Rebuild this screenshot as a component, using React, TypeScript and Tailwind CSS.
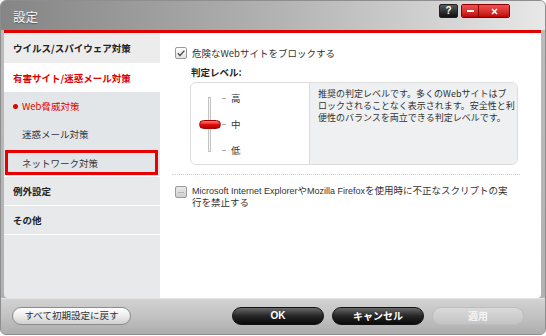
import React from 'react'

const jp = "font-['Noto_Sans_CJK_JP',sans-serif]"

function CheckBox({ checked }: { checked: boolean }) {
  return (
    <div
      className={`w-[12px] h-[12px] shrink-0 rounded-[2px] border border-[#9a9a9a] flex items-center justify-center ${
        checked ? 'bg-gradient-to-b from-white to-[#e2e2e2]' : 'bg-gradient-to-b from-[#e8e8e8] to-[#cfcfcf]'
      }`}
    >
      {checked ? (
        <svg width="10" height="10" viewBox="0 0 10 10">
          <path d="M1.8 5.2 L4 7.4 L8.4 2.6" fill="none" stroke="#4a4a4a" strokeWidth="1.4" />
        </svg>
      ) : (
        <div className="w-[6px] h-[1px] bg-[#b5b5b5]" />
      )}
    </div>
  )
}

export default function App() {
  const levels = ['高', '中', '低']
  const desc = [
    '推奨の判定レベルです。多くのWebサイトはブ',
    'ロックされることなく表示されます。安全性と利',
    '便性のバランスを両立できる判定レベルです。',
  ]

  return (
    <div className={`w-[546px] h-[336px] bg-white text-[#333] ${jp}`}>
      <div className="w-[546px] h-[335px] rounded-[6px] border border-[#8e8e8e] bg-gradient-to-b from-[#bdbdbd] to-[#b0b0b0] flex flex-col overflow-hidden">
        {/* Title bar */}
        <div className="h-[29px] shrink-0 flex items-start justify-between bg-gradient-to-r from-[#858585] via-[#b2b2b2] to-[#e8e8e8] pl-[12px] pr-[35px]">
          <span className="mt-[8px] text-[12.5px] leading-[16px] text-[#f6f6f6] [text-shadow:0_1px_1px_rgba(0,0,0,0.35)]">設定</span>
          <div className="flex mt-[3px] gap-[3px]">
            <div className="w-[19px] h-[14px] rounded-[2px] border border-[#222] bg-gradient-to-b from-[#5a5a5a] to-[#111] flex items-center justify-center">
              <span className="text-[10px] leading-none font-bold text-white font-['Liberation_Sans',sans-serif]">?</span>
            </div>
            <div className="flex h-[14px] rounded-[2px] border border-[#8a0000] overflow-hidden">
              <div className="w-[17px] bg-gradient-to-b from-[#f05050] to-[#c00000] flex items-center justify-center border-r border-[#8a0000]">
                <div className="w-[7px] h-[2px] bg-white" />
              </div>
              <div className="w-[30px] bg-gradient-to-b from-[#f05050] to-[#c00000] flex items-center justify-center">
                <svg width="7" height="7" viewBox="0 0 7 7">
                  <path d="M1 1 L6 6 M6 1 L1 6" stroke="white" strokeWidth="1.6" />
                </svg>
              </div>
            </div>
          </div>
        </div>

        {/* Body */}
        <div className="flex-1 flex flex-col pl-[3px] pr-[4px]">
          <div className="h-[3px] bg-[#e00000] shrink-0" />
          <div className="flex-1 flex rounded-b-[4px] overflow-hidden">
            {/* Sidebar */}
            <div className="w-[156px] shrink-0 bg-[#e7e9eb] flex flex-col text-[9.5px] leading-[12px]">
              <div className="h-[30px] bg-[#ececec] flex items-center pl-[9px] font-bold text-[#222]">ウイルス/スパイウェア対策</div>
              <div className="h-[29px] bg-white flex items-center pl-[9px] font-bold text-[#e00000]">有害サイト/迷惑メール対策</div>
              <div className="bg-[#e3e6e9] flex flex-col border-b border-white">
                <div className="h-[28px] flex items-center pl-[9px] text-[#e00000]">
                  <span className="w-[5px] h-[5px] rounded-full bg-[#e00000] mr-[4px]" />
                  Web脅威対策
                </div>
                <div className="h-[28px] flex items-center pl-[18px] text-[#333]">迷惑メール対策</div>
                <div className="h-[28px] pt-[2px] pl-[1px] pr-[2px]">
                  <div className="h-[25px] border-[3px] border-[#e80000] flex items-center pl-[14px] text-[#333]">ネットワーク対策</div>
                </div>
              </div>
              <div className="h-[29px] flex items-center pl-[9px] font-bold text-[#222] border-b border-white">例外設定</div>
              <div className="h-[29px] flex items-center pl-[9px] font-bold text-[#222] border-b border-white">その他</div>
            </div>

            {/* Main */}
            <div className="flex-1 bg-white pt-[14px] pl-[15px] flex flex-col text-[9.5px] leading-[12px]">
              <div className="flex items-center gap-[5px] h-[12px]">
                <CheckBox checked />
                <span>危険なWebサイトをブロックする</span>
              </div>
              <div className="mt-[7px] ml-[16px] font-bold text-[#222]">判定レベル:</div>
              <div className="mt-[4px] ml-[15px] w-[328px] h-[83px] border border-[#dcdcdc] rounded-[6px] flex overflow-hidden">
                <div className="w-[118px] shrink-0 flex pl-[8px]">
                  <div className="relative w-[22px] h-[55px] mt-[14px]">
                    <div className="absolute left-[9px] top-0 w-[3px] h-[55px] border border-[#c4c4c4] bg-[#f4f4f4]" />
                    <div className="absolute left-0 top-[23px] w-[22px] h-[9px] rounded-full border border-[#a00000] bg-gradient-to-b from-[#ff7070] via-[#e01010] to-[#b00000]" />
                  </div>
                  <div className="ml-[1px] mt-[9px] h-[64px] flex flex-col justify-between">
                    {levels.map((l) => (
                      <div key={l} className="flex items-center h-[12px] text-[9.5px]">
                        <div className="w-[4px] h-[1px] bg-[#aaa] mr-[5px]" />
                        <span>{l}</span>
                      </div>
                    ))}
                  </div>
                </div>
                <div className="flex-1 bg-[#eef0f2] border-l border-[#dcdcdc] pl-[8px] pt-[5px] text-[9px] text-[#333] flex flex-col">
                  {desc.map((line) => (
                    <div key={line} className="h-[12px] leading-[12px] whitespace-nowrap">
                      {line}
                    </div>
                  ))}
                </div>
              </div>
              <div className="mt-[9px] ml-[-3px] w-[348px] border-t border-dotted border-[#cfcfcf]" />
              <div className="mt-[9px] flex items-start gap-[5px]">
                <div className="mt-[2px]">
                  <CheckBox checked={false} />
                </div>
                <div className="flex flex-col">
                  <div className="h-[12px] whitespace-nowrap">
                    <span className="font-['Liberation_Sans',sans-serif] text-[9px]">Microsoft Internet Explorer</span>や
                    <span className="font-['Liberation_Sans',sans-serif] text-[9px]">Mozilla Firefox</span>を使用時に不正なスクリプトの実
                  </div>
                  <div className="h-[12px] whitespace-nowrap">行を禁止する</div>
                </div>
              </div>
            </div>
          </div>
        </div>

        {/* Bottom bar */}
        <div className="h-[36px] shrink-0 flex items-start pt-[8px] pl-[11px] pr-[21px] bg-gradient-to-b from-[#d2d2d2] via-[#c2c2c2] to-[#adadad] border-t border-[#e4e4e4]">
          <button className="w-[119px] h-[18px] rounded-full border border-[#8c8c8c] bg-gradient-to-b from-white via-[#ececec] to-[#cfcfcf] text-[9.5px] leading-none text-[#333]">
            すべて初期設定に戻す
          </button>
          <div className="ml-auto flex gap-[8px]">
            <button className="w-[92px] h-[18px] rounded-full border border-[#111] bg-gradient-to-b from-[#6a6a6a] via-[#262626] to-[#0a0a0a] text-[10px] leading-none font-bold text-white font-['Liberation_Sans','Noto_Sans_CJK_JP',sans-serif]">
              OK
            </button>
            <button className="w-[92px] h-[18px] rounded-full border border-[#111] bg-gradient-to-b from-[#6a6a6a] via-[#262626] to-[#0a0a0a] text-[10px] leading-none font-bold text-white">
              キャンセル
            </button>
            <button className="w-[92px] h-[18px] rounded-full border border-[#bdbdbd] bg-gradient-to-b from-[#dadada] to-[#c4c4c4] text-[10px] leading-none font-bold text-[#f4f4f4]">
              適用
            </button>
          </div>
        </div>
      </div>
    </div>
  )
}
